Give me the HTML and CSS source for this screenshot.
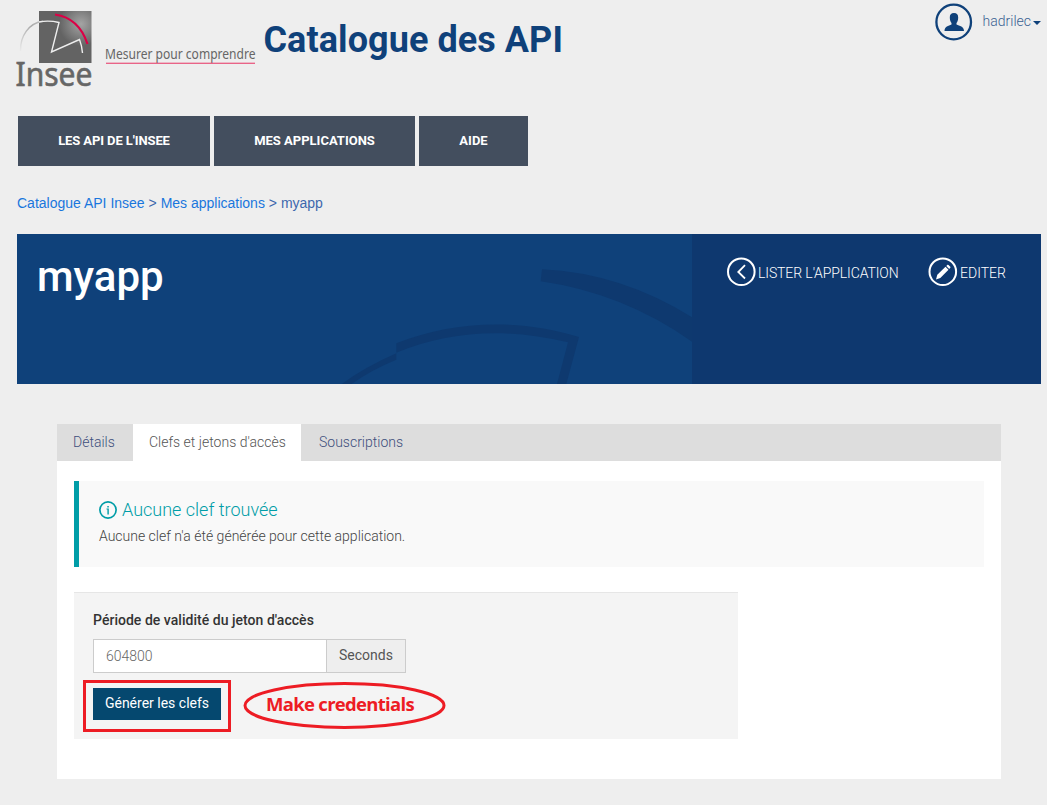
FILE: index.html
```html
<!DOCTYPE html>
<html lang="fr">
<head>
<meta charset="utf-8">
<title>Catalogue des API</title>
<link rel="stylesheet" href="styles.css">
</head>
<body>
<header class="header">
  <svg class="logo" width="250" height="100" viewBox="0 0 250 100" role="img" aria-label="Insee">
    <defs>
      <radialGradient id="glow" gradientUnits="userSpaceOnUse" cx="73" cy="24" r="22">
        <stop offset="0" stop-color="#a4a4a4"/><stop offset="1" stop-color="#636363"/>
      </radialGradient>
      <linearGradient id="fade" gradientUnits="userSpaceOnUse" x1="10" y1="51" x2="34" y2="20">
        <stop offset="0" stop-color="#eee"/><stop offset=".7" stop-color="#aaa"/><stop offset="1" stop-color="#bbb"/>
      </linearGradient>
    </defs>
    <rect x="31" y="11" width="52.500" height="52" fill="url(#glow)"/>
    <path d="M12.500 51C12 36 21 23 35 21.300" fill="none" stroke="url(#fade)" stroke-width="1.400"/>
    <path d="M31 21.900Q41 20 51 22.500L43.500 52L71.500 39.500Q74 46 74.500 53" fill="none" stroke="#eee" stroke-width="1.400"/>
    <path d="M47 14.500Q71 18 79.500 44" fill="none" stroke="#dc0046" stroke-width="2.200"/>
    <text class="logo-name" x="7.500" y="86" textLength="77" lengthAdjust="spacingAndGlyphs">Insee</text>
    <text class="logo-motto" x="97" y="59" textLength="150.500" lengthAdjust="spacingAndGlyphs">Mesurer pour comprendre</text>
    <rect x="98" y="62.700" width="149" height="1.100" fill="#e8426f"/>
  </svg>
  <h1 class="site-title">Catalogue des API</h1>
  <div class="user">
    <svg width="38" height="38" viewBox="0 0 38 38"><circle cx="18.700" cy="19" r="17.300" fill="none" stroke="#0f417a" stroke-width="2.300"/><path d="M19 10c3 0 4.200 1.500 4.200 4.500 0 3-1 4.500-1.700 5.500v1.500c3 1.200 7.500 2 7.500 6.500H9.500c0-4.500 4-5.300 7-6.500V20c-1-1.200-1.700-2.700-1.700-5.500 0-3 1.200-4.500 4.200-4.500z" fill="#0f417a"/></svg>
    <span class="user-name">hadrilec</span><span class="caret"></span>
  </div>
</header>
<nav class="nav">
  <a class="nav-item nav-api">LES API DE L'INSEE</a>
  <a class="nav-item nav-apps">MES APPLICATIONS</a>
  <a class="nav-item nav-help">AIDE</a>
</nav>
<div class="breadcrumb"><a>Catalogue API Insee</a> &gt; <a>Mes applications</a> &gt; <span>myapp</span></div>
<section class="hero">
  <div class="hero-main"><h2 class="app-name">myapp</h2>
    <svg class="hero-art" width="675" height="150" viewBox="0 0 675 150"><g fill="#0e396f"><path d="M525 35.300Q604 39 675 83.300V107.700Q606 59 523.700 47.300z"/><path d="M379.300 109.300C435 87 500 84 562 103L549.300 150H540L551 108.300C490 94 435 96 379.300 118.700z"/><path d="M324.700 150Q348 133 379.300 119.300V125.700Q354 136 334.700 150z"/></g></svg>
  </div>
  <div class="hero-actions">
    <a class="action action-list"><svg width="30" height="30" viewBox="0 0 30 30" fill="none" stroke="#fff"><circle cx="15.300" cy="14.700" r="13.300" stroke-width="2"/><path d="M19 8.200L12.300 15L19 21.500" stroke-width="1.800"/></svg><span class="action-label">LISTER L'APPLICATION</span></a>
    <a class="action"><svg width="30" height="30" viewBox="0 0 30 30"><circle cx="14.800" cy="14.700" r="13.300" fill="none" stroke="#fff" stroke-width="2"/><path d="M8 22.500L9.300 17.800L17.500 9.800L20.500 12.800L12.300 21zM18.300 9L19.500 7.800Q20 7.500 20.500 8L22.300 9.800Q22.700 10.300 22.300 10.800L21.200 12z" fill="#fff"/></svg><span>EDITER</span></a>
  </div>
</section>
<main class="panel">
  <div class="tabs"><a class="tab tab-details">Détails</a><a class="tab tab-active">Clefs et jetons d'accès</a><a class="tab tab-subs">Souscriptions</a></div>
  <div class="panel-body">
    <div class="notice">
      <h3 class="notice-title"><svg width="18" height="18" viewBox="0 0 18 18"><circle cx="9" cy="9" r="8.100" fill="none" stroke="#009da7" stroke-width="1.700"/><path d="M8.300 5h1.500v1.400H8.300zM7.500 7.600h2.300V13.500H8.400V8.500H7.500z" fill="#009da7"/></svg><span>Aucune clef trouvée</span></h3>
      <p class="notice-text">Aucune clef n'a été générée pour cette application.</p>
    </div>
    <div class="form">
      <label class="form-label">Période de validité du jeton d'accès</label>
      <div class="input-group"><div class="input">604800</div><div class="addon">Seconds</div></div>
      <div class="form-actions">
        <div class="highlight"><button class="button">Générer les clefs</button></div>
        <div class="callout"><svg class="callout-ring" width="204" height="49" viewBox="0 0 204 49"><ellipse cx="101.500" cy="24.500" rx="99.500" ry="22" fill="none" stroke="#ed1c24" stroke-width="3"/></svg><span class="callout-text">Make credentials</span></div>
      </div>
    </div>
  </div>
</main>
</body>
</html>
```
FILE: styles.css
```css
* { box-sizing: border-box; }
body { margin: 0; width: 1047px; height: 805px; overflow: hidden; background: #eee; font-family: Roboto, sans-serif; font-size: 14px; font-weight: 300; color: #444; }
h1, h2, h3, p { margin: 0; }
svg { display: block; flex: none; }
.header { display: flex; height: 116px; padding-left: 8px; }
.logo { flex: none; }
.logo text { fill: #666; font-family: "Noto Sans", sans-serif; font-weight: 400; }
.logo .logo-name { font-size: 32px; stroke: #666; stroke-width: .6px; }
.logo .logo-motto { font-size: 14px; }
.site-title { margin: 19px 0 0 5.500px; font-size: 36px; line-height: 42px; font-weight: 700; color: #0f417a; white-space: nowrap; letter-spacing: .07px; }
.user { display: flex; margin: 3px 6px 0 auto; height: 38px; }
.user-name { margin-left: 10px; line-height: 36px; color: #3a6292; }
.caret { margin: 18px 0 0 2px; width: 8px; height: 4px; border: 4px solid transparent; border-top-color: #0f417a; border-bottom: 0; }
.nav { display: flex; gap: 4px; padding-left: 18px; height: 50px; }
.nav-item { display: flex; align-items: center; justify-content: center; background: #434e5e; color: #fff; font-size: 13px; font-weight: 700; padding-bottom: 1px; }
.nav-api { width: 192px; letter-spacing: -.1px; }
.nav-apps { width: 201px; }
.nav-help { width: 109px; }
.breadcrumb { height: 68px; padding: 27px 0 0 17px; font-family: "Liberation Sans", sans-serif; font-weight: 400; line-height: 20px; font-size: 14px; color: #3d68ad; }
.breadcrumb a { color: #1976dd; }
.hero { display: flex; width: 1024px; height: 150px; margin-left: 17px; background: #0e386f; }
.hero-main { position: relative; width: 675px; background: #0f417a; padding: 18px 0 0 20px; }
.hero-art { position: absolute; left: 0; top: 0; }
.app-name { font-size: 42px; line-height: 50px; font-weight: 500; color: #fff; }
.hero-actions { display: flex; padding: 23px 0 0 34px; }
.action { display: flex; height: 30px; gap: 2px; color: #fff; line-height: 32px; white-space: nowrap; }
.action-list { width: 202px; }
.action-label { letter-spacing: -.1px; }
.panel { width: 944px; height: 355px; margin: 40px 0 0 57px; background: #fff; }
.tabs { display: flex; height: 37px; background: #ddd; line-height: 36px; }
.tab { color: #3e4f7c; }
.tab-details { width: 76px; padding-left: 16px; }
.tab-active { width: 168px; padding-left: 16px; background: #fff; color: #555; }
.tab-subs { padding-left: 18px; }
.panel-body { padding: 20px 17px 0; }
.notice { height: 86px; background: #f9f9f9; border-left: 5px solid #009da7; padding: 18px 0 0 20px; }
.notice-title { display: flex; gap: 5px; align-items: center; height: 22px; font-size: 18px; line-height: 22px; font-weight: 300; color: #009da7; }
.notice-text { margin-top: 5px; line-height: 20px; }
.form { width: 664px; height: 147px; margin-top: 25px; border-top: 1px solid #e6e6e6; background: #f4f4f4; padding: 17px 0 0 9px; }
.form-label { display: block; padding-left: 10px; line-height: 20px; font-weight: 500; color: #333; letter-spacing: .03px; }
.input-group { display: flex; width: 313px; height: 34px; margin: 9px 0 0 10px; border: 1px solid #ccc; line-height: 32px; }
.input { width: 232px; background: #fff; padding-left: 12px; color: #666; }
.addon { flex: 1; border-left: 1px solid #ccc; background: #eee; text-align: center; font-weight: 400; color: #555; line-height: 31px; }
.form-actions { display: flex; margin-top: 7px; }
.highlight { width: 148px; height: 52px; border: 3px solid #ed1c24; padding: 5px 7px; }
.button { display: block; width: 128px; height: 32px; border: 0; padding: 0 0 1px; background: #05486f; color: #fff; font: 400 14px/31px Roboto, sans-serif; }
.callout { position: relative; width: 204px; height: 49px; margin: 1px 0 0 12px; }
.callout-ring { position: absolute; left: 0; top: 0; }
.callout-text { display: block; padding-left: 23px; font: 700 18.500px/45px "Open Sans", sans-serif; color: #ed1c24; letter-spacing: -.7px; white-space: nowrap; }
```
